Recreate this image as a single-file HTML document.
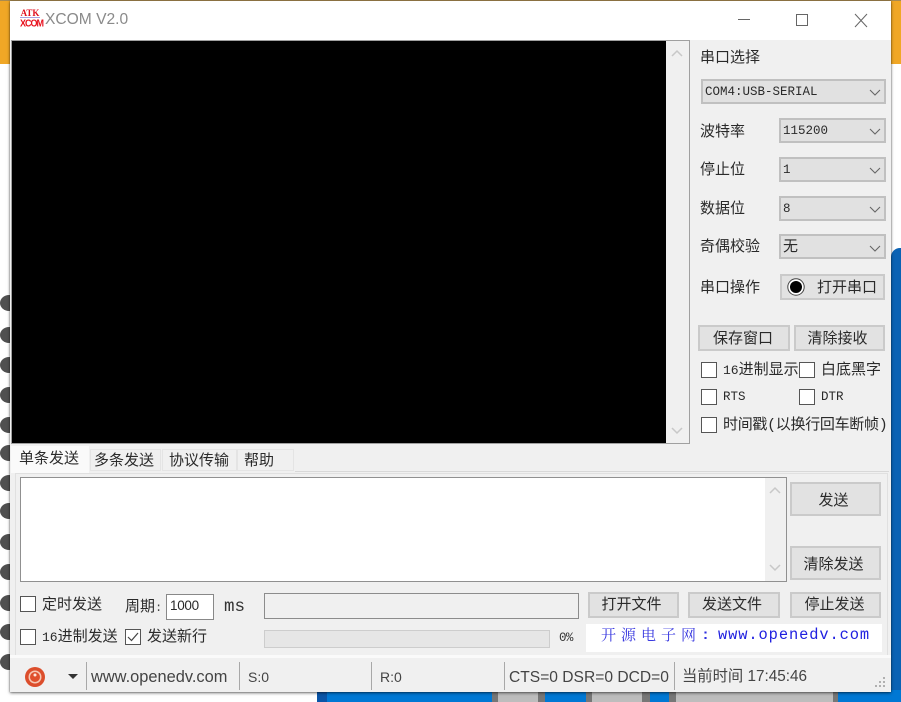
<!DOCTYPE html>
<html>
<head>
<meta charset="utf-8">
<style>
html,body{margin:0;padding:0;width:901px;height:702px;overflow:hidden;background:#fff}
#r{position:relative;width:901px;height:702px;overflow:hidden;font-family:"Liberation Sans","Noto Sans CJK SC",sans-serif;color:#222}
#r div,#r span{position:absolute;box-sizing:border-box}
.t{font-size:15px;line-height:20px;white-space:nowrap;font-family:"Liberation Mono","Noto Sans CJK SC",monospace;color:#2a2a2a}
.m{font-size:12.5px;line-height:20px;white-space:nowrap;font-family:"Liberation Mono",monospace;color:#2a2a2a}
.s{font-size:15px;line-height:20px;white-space:nowrap;font-family:"Liberation Sans","Noto Sans CJK SC",sans-serif;color:#444}
.combo{background:#e1e1e1;border:2px solid #c0c0c0}
.btn{background:#e2e2e2;border:2px solid #cacaca;text-align:center;font-size:15px;font-family:"Liberation Sans","Noto Sans CJK SC",sans-serif;color:#2a2a2a;white-space:nowrap;padding-right:4px}
.cb{width:16px;height:16px;background:#fff;border:1px solid #555}
.sep{width:1px;top:662px;height:28px;background:#a8a8a8}
.dot{left:0;width:10px;height:16px;background:#505050;clip-path:ellipse(9px 8px at 9px 8px)}
</style>
</head>
<body>
<div id="r">
<!-- background -->
<div style="left:0;top:0;width:901px;height:64px;background:#f0a726"></div>
<div style="left:0;top:0;width:901px;height:1px;background:#a98a50"></div>
<div style="left:891px;top:248px;width:10px;height:454px;background:#0a62b4;border-radius:9px 0 0 0"></div>
<div class="dot" style="top:295px"></div><div class="dot" style="top:327px"></div><div class="dot" style="top:357px"></div><div class="dot" style="top:387px"></div><div class="dot" style="top:417px"></div><div class="dot" style="top:445px"></div><div class="dot" style="top:475px"></div><div class="dot" style="top:503px"></div><div class="dot" style="top:534px"></div><div class="dot" style="top:564px"></div><div class="dot" style="top:595px"></div><div class="dot" style="top:624px"></div><div class="dot" style="top:654px"></div>
<div style="left:317px;top:690px;width:175px;height:12px;background:#0078d4"></div>
<div style="left:317px;top:690px;width:10px;height:12px;background:#0a55a8"></div>
<div style="left:492px;top:690px;width:6px;height:12px;background:#777"></div>
<div style="left:498px;top:690px;width:40px;height:12px;background:#bdbdbd"></div>
<div style="left:538px;top:690px;width:7px;height:12px;background:#777"></div>
<div style="left:545px;top:690px;width:41px;height:12px;background:#0078d4"></div>
<div style="left:586px;top:690px;width:6px;height:12px;background:#777"></div>
<div style="left:592px;top:690px;width:50px;height:12px;background:#bdbdbd"></div>
<div style="left:642px;top:690px;width:8px;height:12px;background:#777"></div>
<div style="left:650px;top:690px;width:19px;height:12px;background:#0078d4"></div>
<div style="left:669px;top:690px;width:7px;height:12px;background:#777"></div>
<div style="left:676px;top:690px;width:157px;height:12px;background:#bdbdbd"></div>
<div style="left:833px;top:690px;width:5px;height:12px;background:#777"></div>
<div style="left:838px;top:690px;width:63px;height:12px;background:#0078d4"></div>
<div style="left:0;top:692px;width:317px;height:10px;background:#fff"></div>

<!-- window -->
<div style="left:10px;top:1px;width:881px;height:691px;background:#f0f0f0;box-shadow:0 1px 3px rgba(0,0,0,.55),0 0 1px rgba(0,0,0,.5)"></div>
<div style="left:10px;top:1px;width:881px;height:39px;background:#fff"></div>
<!-- title -->
<span style="left:20px;top:9px;width:20px;height:8px;font:bold 9px/9px 'Liberation Serif',serif;color:#e01020;text-align:center">ATK</span>
<div style="left:20px;top:17px;width:20px;height:1px;background:#a8a0e0"></div>
<span style="left:20px;top:18px;width:20px;height:10px;font:bold 9px/10px 'Liberation Sans',sans-serif;color:#e8101c;text-align:center;letter-spacing:-1px;transform:scaleY(1.1)">XCOM</span>
<span style="left:45px;top:10px;font-size:15.6px;line-height:20px;color:#8a8a8a;white-space:nowrap">XCOM V2.0</span>
<svg style="position:absolute;left:730px;top:8px" width="150" height="24" fill="none" stroke="#666" stroke-width="1"><path d="M8 11.5H20"/><rect x="66.5" y="6.5" width="11" height="11"/><path d="M125 6L137 19M137 6L125 19"/></svg>

<!-- display -->
<div style="left:11px;top:40px;width:679px;height:404px;background:#f0f0f0;border:1px solid #a0a0a0"></div>
<div style="left:12px;top:41px;width:654px;height:402px;background:#000"></div>
<svg style="position:absolute;left:670px;top:46px" width="14" height="394" fill="none" stroke="#c8c8c8" stroke-width="1.5"><path d="M2 10L7 5L12 10"/><path d="M2 382L7 387L12 382"/></svg>

<!-- right panel -->
<span class="t" style="left:700px;top:49px">串口选择</span>
<div class="combo" style="left:701px;top:79px;width:185px;height:25px"></div>
<span class="m" style="left:705px;top:82px">COM4:USB-SERIAL</span>
<span class="t" style="left:700px;top:123px">波特率</span>
<div class="combo" style="left:779px;top:118px;width:107px;height:25px"></div>
<span class="m" style="left:783px;top:121px">115200</span>
<span class="t" style="left:700px;top:161px">停止位</span>
<div class="combo" style="left:779px;top:157px;width:107px;height:25px"></div>
<span class="m" style="left:783px;top:160px">1</span>
<span class="t" style="left:700px;top:200px">数据位</span>
<div class="combo" style="left:779px;top:196px;width:107px;height:25px"></div>
<span class="m" style="left:783px;top:199px">8</span>
<span class="t" style="left:700px;top:238px">奇偶校验</span>
<div class="combo" style="left:779px;top:234px;width:107px;height:25px"></div>
<span class="t" style="left:783px;top:238px">无</span>
<svg style="position:absolute;left:860px;top:81px" width="30" height="180" fill="none" stroke="#666" stroke-width="1.1"><path d="M10 9L15 14L20 9"/><path d="M10 48L15 53L20 48"/><path d="M10 87L15 92L20 87"/><path d="M10 126L15 131L20 126"/><path d="M10 165L15 170L20 165"/></svg>

<span class="t" style="left:700px;top:279px">串口操作</span>
<div class="btn" style="left:780px;top:274px;width:105px;height:26px"></div>
<svg style="position:absolute;left:786px;top:277px" width="20" height="20"><circle cx="10" cy="10" r="8.2" fill="#fff" stroke="#444" stroke-width="1"/><circle cx="10" cy="10" r="6" fill="#000"/></svg>
<span class="t" style="left:817px;top:279px">打开串口</span>

<div class="btn" style="left:698px;top:325px;width:92px;height:26px;line-height:23px;padding-right:2px">保存窗口</div>
<div class="btn" style="left:794px;top:325px;width:91px;height:26px;line-height:23px">清除接收</div>

<div class="cb" style="left:701px;top:362px"></div>
<span class="t" style="left:723px;top:361px"><span style="position:static;font-size:13px;font-family:'Liberation Mono',monospace">16</span>进制显示</span>
<div class="cb" style="left:799px;top:362px"></div>
<span class="t" style="left:821px;top:361px">白底黑字</span>
<div class="cb" style="left:701px;top:389px"></div>
<span class="m" style="left:723px;top:387px">RTS</span>
<div class="cb" style="left:799px;top:389px"></div>
<span class="m" style="left:821px;top:387px">DTR</span>
<div class="cb" style="left:701px;top:417px"></div>
<span class="t" style="left:723px;top:416px;letter-spacing:-.3px">时间戳(以换行回车断帧)</span>

<!-- tabs -->
<div style="left:295px;top:471px;width:594px;height:1px;background:#d8d8d8"></div>
<div style="left:90px;top:449px;width:71px;height:22px;background:#f0f0f0;border:1px solid #e4e4e4"></div>
<div style="left:162px;top:449px;width:75px;height:22px;background:#f0f0f0;border:1px solid #e4e4e4"></div>
<div style="left:237px;top:449px;width:57px;height:22px;background:#f0f0f0;border:1px solid #e4e4e4"></div>
<div style="left:11px;top:446px;width:78px;height:27px;background:#fafafa"></div>
<span class="t" style="left:19px;top:450px">单条发送</span>
<span class="t" style="left:94px;top:452px">多条发送</span>
<span class="t" style="left:169px;top:452px">协议传输</span>
<span class="t" style="left:244px;top:452px">帮助</span>

<!-- send panel -->
<div style="left:15px;top:473px;width:873px;height:182px;background:#f0f0f0;border:1px solid #e0e0e0;border-bottom:0"></div>
<div style="left:20px;top:477px;width:767px;height:105px;background:#fff;border:1px solid #909090"></div>
<div style="left:765px;top:478px;width:21px;height:103px;background:#f0f0f0"></div>
<svg style="position:absolute;left:768px;top:484px" width="14" height="92" fill="none" stroke="#c8c8c8" stroke-width="1.5"><path d="M2 9L7 4L12 9"/><path d="M2 81L7 86L12 81"/></svg>
<div class="btn" style="left:790px;top:482px;width:91px;height:34px;line-height:33px">发送</div>
<div class="btn" style="left:790px;top:546px;width:91px;height:34px;line-height:33px">清除发送</div>

<div class="cb" style="left:20px;top:596px"></div>
<span class="t" style="left:42px;top:596px">定时发送</span>
<span class="t" style="left:125px;top:598px">周期<span style="position:static;font-size:12px;color:#444">:</span></span>
<div style="left:166px;top:594px;width:48px;height:26px;background:#fff;border:1px solid #888"></div>
<span class="m" style="left:170px;top:596px;font-family:'Liberation Sans',sans-serif;font-size:13.5px;letter-spacing:-.3px">1000</span>
<span class="m" style="left:224px;top:597px;font-size:17.5px;color:#333">ms</span>
<div style="left:264px;top:593px;width:315px;height:26px;background:#f0f0f0;border:1px solid #8c8c8c"></div>
<div class="btn" style="left:588px;top:592px;width:91px;height:26px;line-height:22px">打开文件</div>
<div class="btn" style="left:688px;top:592px;width:92px;height:26px;line-height:22px">发送文件</div>
<div class="btn" style="left:790px;top:592px;width:91px;height:26px;line-height:22px;padding-right:2px">停止发送</div>

<div class="cb" style="left:20px;top:629px"></div>
<span class="t" style="left:42px;top:628px"><span style="position:static;font-size:13px;font-family:'Liberation Mono',monospace">16</span>进制发送</span>
<div class="cb" style="left:125px;top:629px"></div>
<svg style="position:absolute;left:125px;top:629px" width="16" height="16" fill="none" stroke="#444" stroke-width="1.2"><path d="M3 8L6.5 11.5L13 4"/></svg>
<span class="t" style="left:147px;top:628px">发送新行</span>
<div style="left:264px;top:630px;width:286px;height:18px;background:#e6e6e6;border:1px solid #cdcdcd"></div>
<span class="m" style="left:559px;top:628px;font-size:12.5px;letter-spacing:-.6px;color:#333">0%</span>
<div style="left:586px;top:624px;width:296px;height:28px;background:#fff"></div>
<span style="left:601px;top:625px;font-size:15px;letter-spacing:5px;line-height:20px;white-space:nowrap;font-family:'Noto Serif CJK SC',serif;color:#3a3ae0">开源电子网</span>
<span style="left:703px;top:625px;font-size:15px;line-height:20px;font-family:'Liberation Sans',sans-serif;font-weight:bold;color:#2f2fe0">:</span>
<span style="left:718px;top:625px;font-size:15.4px;letter-spacing:.9px;line-height:20px;white-space:nowrap;font-family:'Liberation Mono',monospace;color:#2020e0">www.openedv.com</span>

<!-- status bar -->
<div style="left:10px;top:655px;width:881px;height:3px;background:#fafafa"></div>
<svg style="position:absolute;left:24px;top:666px" width="22" height="22"><circle cx="11" cy="11" r="10" fill="#dc4e2c"/><circle cx="11" cy="11" r="6.5" fill="#f6c8b4"/><circle cx="11" cy="11" r="5" fill="#e0502c"/><circle cx="11" cy="9" r="1.5" fill="#fbe6dc"/></svg>
<svg style="position:absolute;left:67px;top:673px" width="12" height="8"><path d="M1 1H11L6 6Z" fill="#333"/></svg>
<div class="sep" style="left:86px"></div>
<span class="s" style="left:91px;top:668px;font-size:16.4px;line-height:19px">www.openedv.com</span>
<div class="sep" style="left:239px"></div>
<span class="s" style="left:248px;top:667px;font-size:14px">S:0</span>
<div class="sep" style="left:371px"></div>
<span class="s" style="left:380px;top:667px;font-size:14px">R:0</span>
<div class="sep" style="left:504px"></div>
<span class="s" style="left:509px;top:668px;font-size:15.6px;line-height:19px">CTS=0 DSR=0 DCD=0</span>
<div class="sep" style="left:674px"></div>
<span class="s" style="left:682px;top:667px;font-size:15.3px">当前时间 17:45:46</span>
<svg style="position:absolute;left:874px;top:676px" width="14" height="14" fill="#b0b0b0"><rect x="9" y="1" width="2" height="2"/><rect x="5" y="5" width="2" height="2"/><rect x="9" y="5" width="2" height="2"/><rect x="1" y="9" width="2" height="2"/><rect x="5" y="9" width="2" height="2"/><rect x="9" y="9" width="2" height="2"/></svg>
</div>
</body>
</html>
